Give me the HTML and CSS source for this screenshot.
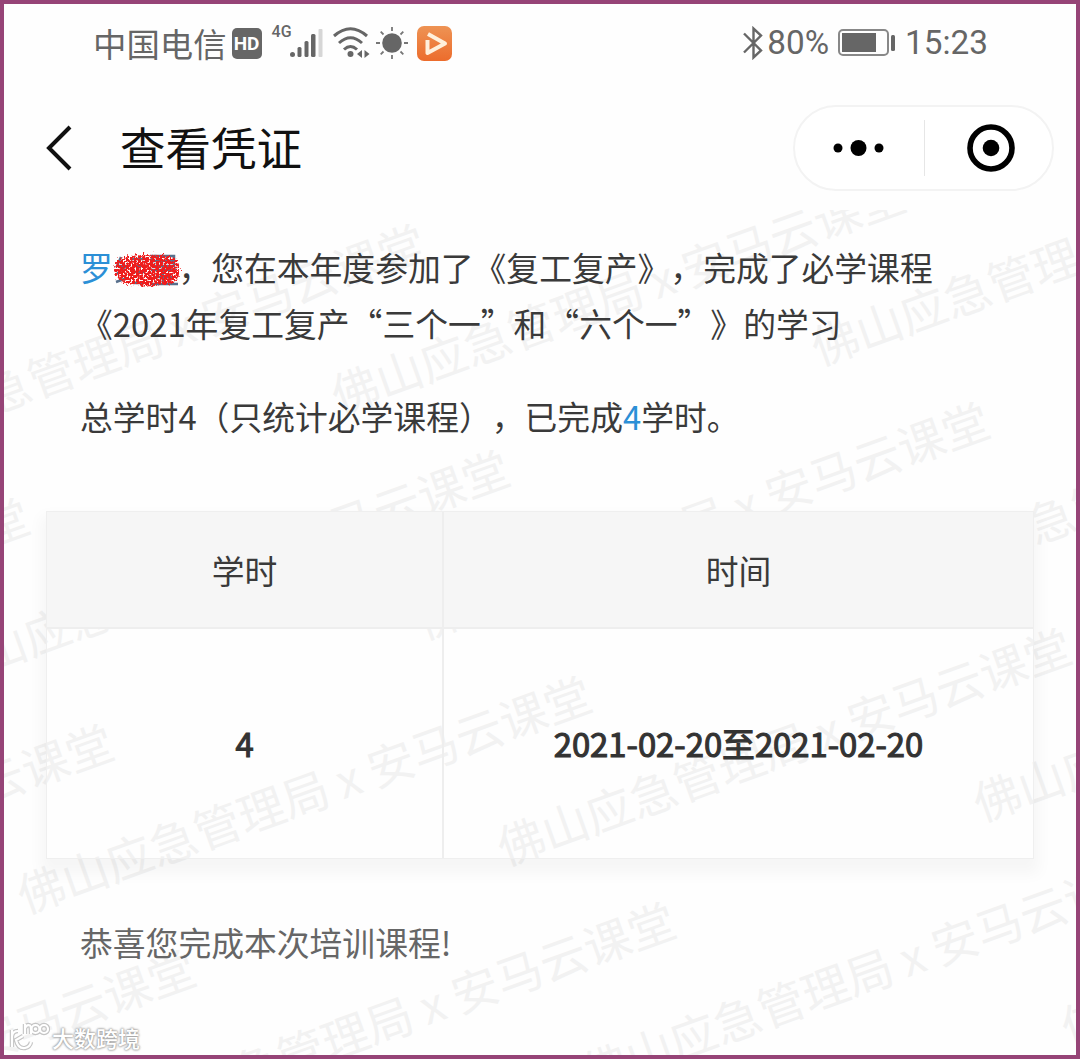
FILE: index.html
```html
<!DOCTYPE html>
<html lang="zh-CN">
<head>
    <meta charset="UTF-8">
    <meta name="viewport" content="width=device-width, initial-scale=1.0">
    <title>查看凭证</title>
    <link rel="stylesheet" href="styles.css">
</head>
<body>
    <div class="screen">
        <svg class="watermark" viewBox="0 0 1072 845">
            <defs>
                <text id="mark" x="-24" y="17" transform="rotate(-19.800)">佛山应急管理局 x 安马云课堂</text>
            </defs>
            <g transform="translate(1 -216)">
                <use href="#mark" x="-129" y="204"/>
                <use href="#mark" x="351" y="396"/>
                <use href="#mark" x="-129" y="444"/>
                <use href="#mark" x="831" y="348"/>
                <use href="#mark" x="-525" y="718"/>
                <use href="#mark" x="-45" y="670"/>
                <use href="#mark" x="435" y="622"/>
                <use href="#mark" x="915" y="574"/>
                <use href="#mark" x="-441" y="944"/>
                <use href="#mark" x="37" y="896"/>
                <use href="#mark" x="517" y="848"/>
                <use href="#mark" x="993" y="804"/>
                <use href="#mark" x="-359" y="1170"/>
                <use href="#mark" x="121" y="1122"/>
                <use href="#mark" x="601" y="1074"/>
                <use href="#mark" x="1081" y="1028"/>
            </g>
        </svg>

        <div class="status-bar">
            <div class="status-left">
                <span class="carrier">中国电信</span>
                <span class="hd">HD</span>
                <span class="net">4G</span>
                <svg class="signal" width="34" height="32" viewBox="0 0 34 32">
                    <circle cx="3.500" cy="27.500" r="2.500"/>
                    <rect x="8.500" y="20" width="4" height="10" rx="1.500"/>
                    <rect x="15.500" y="14" width="4" height="16" rx="1.500"/>
                    <rect x="22" y="7" width="4.500" height="23" rx="1.500"/>
                    <rect class="dim" x="29.500" y="2" width="4" height="28" rx="1"/>
                </svg>
                <svg class="wifi" width="38" height="34" viewBox="0 0 38 34">
                    <path d="M2 10Q18.500 -4.500 35 10M7 17Q18.500 6.500 30 17M12 23.500Q18.500 17.500 25 23.500"/>
                    <circle cx="18.500" cy="28" r="3"/>
                    <path class="fill" d="M25 28l5-4v8zM37.500 28l-5-4v8z"/>
                </svg>
                <svg class="sun" width="34" height="34" viewBox="0 0 34 34">
                    <circle cx="17" cy="17" r="9.800"/>
                    <path d="M17 1v4M17 29v4M1 17h4M29 17h4M5.700 5.700l2.800 2.800M25.500 25.500l2.800 2.800M28.300 5.700l-2.800 2.800M8.500 25.500l-2.800 2.800"/>
                </svg>
                <svg class="player" width="35" height="35" viewBox="0 0 35 35">
                    <defs>
                        <linearGradient id="orange" x1="0" y1="0" x2="0" y2="1">
                            <stop offset="0" stop-color="#ee9354"/>
                            <stop offset="1" stop-color="#ec6c2c"/>
                        </linearGradient>
                    </defs>
                    <rect width="35" height="35" rx="7" fill="url(#orange)"/>
                    <path d="M11 8L28 17.500L10.500 27V14"/>
                </svg>
            </div>
            <div class="status-right">
                <svg class="bluetooth" width="22" height="34" viewBox="0 0 22 34">
                    <path d="M2 7.500L19 24.500L11.500 31.500V2.500L19 9.500L2 26.500"/>
                </svg>
                <span>80%</span>
                <svg class="battery" width="58" height="28" viewBox="0 0 58 28">
                    <rect class="case" x="1" y="1" width="49" height="25" rx="4"/>
                    <rect x="4" y="4" width="34" height="19"/>
                    <rect x="53" y="6" width="4" height="16" rx="1.500"/>
                </svg>
                <span>15:23</span>
            </div>
        </div>

        <div class="nav">
            <svg class="back" width="28" height="48" viewBox="0 0 28 48">
                <path d="M25 3L4 24L25 45"/>
            </svg>
            <h1>查看凭证</h1>
            <div class="capsule">
                <svg width="54" height="20" viewBox="0 0 54 20">
                    <circle cx="6" cy="10" r="4.500"/>
                    <circle cx="26.500" cy="10" r="8"/>
                    <circle cx="47" cy="10" r="4.500"/>
                </svg>
                <span class="line"></span>
                <svg width="50" height="50" viewBox="0 0 50 50">
                    <circle class="ring" cx="25" cy="25" r="21"/>
                    <circle cx="25" cy="25" r="8.300"/>
                </svg>
            </div>
        </div>

        <div class="content">
            <p class="intro"><span class="blue">罗</span><span class="hidden-name">
                <svg width="70" height="36" viewBox="0 0 70 36">
                    <defs>
                        <filter id="rough" x="-10%" y="-10%" width="120%" height="120%">
                            <feTurbulence type="fractalNoise" baseFrequency="0.5" numOctaves="2" seed="4" result="noise"/>
                            <feDisplacementMap in="SourceGraphic" in2="noise" scale="12" xChannelSelector="R" yChannelSelector="G" result="shape"/>
                            <feColorMatrix in="noise" type="matrix" values="0 0 0 0 0  0 0 0 0 0  0 0 0 0 0  0 0 0 9 -3.300" result="holes"/>
                            <feComposite in="shape" in2="holes" operator="in"/>
                        </filter>
                    </defs>
                    <path class="strokes" d="M8 5L4 14H13L4 22M3 30L14 26M17 7H33M19 14H31M18 20H32M20 31H31M39 4H61V14H39ZM39 9H61M38 18H63M42 25H59M37 32H65M50 14V32"/>
                    <path class="scribble" filter="url(#rough)" d="M1 18Q3 4 18 4Q34 2 48 3Q66 4 67 17Q66 32 52 32Q38 36 24 33Q4 32 1 18Z"/>
                </svg></span>，您在本年度参加了《复工复产》，完成了必学课程<br>《2021年复工复产“三个一”和“六个一”》的学习</p>
            <p class="total">总学时4（只统计必学课程），已完成<span class="blue">4</span>学时。</p>

            <table>
                <tr>
                    <th>学时</th>
                    <th>时间</th>
                </tr>
                <tr>
                    <td>4</td>
                    <td>2021-02-20至2021-02-20</td>
                </tr>
            </table>

            <p class="congrats">恭喜您完成本次培训课程!</p>
        </div>

        <div class="logo">
            <svg width="42" height="32" viewBox="0 0 42 32">
                <defs>
                    <path id="logo-lines" d="M4 9V26M4 15Q5 10 10 10M15 15L8 19Q10 28 17 27Q22 26 23 21M17 3V13M17 7Q19 3 22 4.500Q23 5 23 13M31.500 8a4 4 0 1 1 -8 0a4 4 0 1 1 8 0M40 8a4 4 0 1 1 -8 0a4 4 0 1 1 8 0"/>
                </defs>
                <use class="edge" href="#logo-lines"/>
                <use href="#logo-lines"/>
            </svg>
            <span>大数跨境</span>
        </div>
    </div>
</body>
</html>
```
FILE: styles.css
```css
* {
    box-sizing: border-box;
}

body {
    margin: 0;
    font-family: "Noto Sans CJK SC", sans-serif;
    background: #fefefe;
    color: #3a3a3a;
    text-spacing-trim: space-all;
}

svg {
    display: block;
    flex: none;
}

.screen {
    position: relative;
    width: 1080px;
    height: 1059px;
    border: 4px solid #964477;
    overflow: hidden;
}

/* sits behind the page content */
.watermark {
    position: absolute;
    left: 0;
    top: 206px;
    width: 1072px;
    height: 845px;
    font-size: 46.8px;
    fill: #f2f2f2;
}

.status-bar {
    display: flex;
    justify-content: space-between;
    align-items: center;
    height: 78px;
    padding: 0 88px 0 89px;
    color: #666;
    fill: #666;
}

.status-left,
.status-right {
    display: flex;
    align-items: center;
}

.carrier {
    font-size: 33.4px;
    font-weight: 400;
    line-height: 40px;
}

.hd {
    width: 30px;
    height: 31px;
    margin-left: 5px;
    border-radius: 5px;
    background: #666;
    color: #fff;
    font: bold 19px/31px "Roboto", sans-serif;
    text-align: center;
}

.net {
    align-self: flex-start;
    margin: -1px 0 0 10px;
    font: 500 16px/20px "Roboto", sans-serif;
}

.signal {
    margin-left: -3px;
}

.signal .dim {
    fill: #d6d6d6;
}

.wifi {
    margin-left: 9px;
}

.wifi path {
    fill: none;
    stroke: #666;
    stroke-width: 3;
}

.wifi .fill {
    fill: #666;
    stroke: none;
}

.sun {
    margin-left: 5px;
}

.sun path {
    stroke: #777;
    stroke-width: 1.8;
}

.player {
    margin-left: 8px;
}

.player path {
    fill: none;
    stroke: #fff0dc;
    stroke-width: 4;
    stroke-linejoin: round;
}

.status-right {
    font: 33.3px/40px "Roboto", sans-serif;
}

.bluetooth {
    margin-right: 3px;
    fill: none;
    stroke: #666;
    stroke-width: 2.4;
}

.battery {
    margin: 0 9px 0 9px;
}

.battery .case {
    fill: none;
    stroke: #888;
    stroke-width: 2;
}

.nav {
    display: flex;
    align-items: center;
    height: 131px;
    padding: 0 22px 0 41px;
}

.back {
    fill: none;
    stroke: #111;
    stroke-width: 4;
}

h1 {
    margin: -3px auto 0 47px;
    font-size: 45.5px;
    font-weight: 400;
    line-height: 60px;
    color: #111;
}

.capsule {
    display: flex;
    align-items: center;
    justify-content: space-between;
    width: 261px;
    height: 86px;
    padding: 0 36px 0 37px;
    border: 2px solid #f3f3f3;
    border-radius: 43px;
    background: #fff;
}

.capsule .line {
    width: 1px;
    height: 56px;
    margin-right: 4px;
    background: #e6e6e6;
}

.capsule .ring {
    fill: none;
    stroke: #000;
    stroke-width: 5.6;
}

.content {
    position: relative;
    padding: 26px 42px 0;
}

.content p {
    margin: 0 34px;
    font-size: 32.8px;
    line-height: 56px;
    white-space: nowrap;
}

.blue {
    color: #2b8fd6;
}

.hidden-name {
    display: inline-block;
    width: 65.6px;
    height: 36px;
    vertical-align: -7px;
}

.hidden-name svg {
    overflow: visible;
}

.strokes {
    fill: none;
    stroke: #58708c;
    stroke-width: 2.5;
}

.scribble {
    fill: #ee1c1c;
}

.content .total {
    margin-top: 37px;
}

table {
    width: 988px;
    margin-top: 67px;
    border-collapse: separate;
    border-spacing: 0;
    border: 1px solid #efefef;
    box-shadow: 0 10px 14px 5px rgba(0, 0, 0, 0.035);
    font-size: 32.8px;
    table-layout: fixed;
}

th {
    height: 117px;
    padding: 0;
    background: #f6f6f6;
    border-bottom: 2px solid #eee;
    font-weight: 400;
}

td {
    height: 229px;
    padding: 0 0 2px;
    text-align: center;
    color: #333;
    -webkit-text-stroke: 1.1px #333;
}

th:first-child,
td:first-child {
    width: 397px;
    border-right: 2px solid #eee;
}

.content .congrats {
    margin-top: 55px;
    color: #666;
}

/* site logo in the corner */
.logo {
    position: absolute;
    left: 4px;
    bottom: 0;
    display: flex;
    align-items: center;
    gap: 2px;
    height: 36px;
    color: #fff;
}

.logo span {
    font-size: 22px;
    font-weight: 500;
    text-shadow: 0 0 2px #999, 0 0 2px #aaa, 0 0 3px #aaa;
}

.logo use {
    fill: none;
    stroke: #fff;
    stroke-width: 2.2;
}

.logo .edge {
    stroke: #c4c4c4;
    stroke-width: 4.4;
}
```
